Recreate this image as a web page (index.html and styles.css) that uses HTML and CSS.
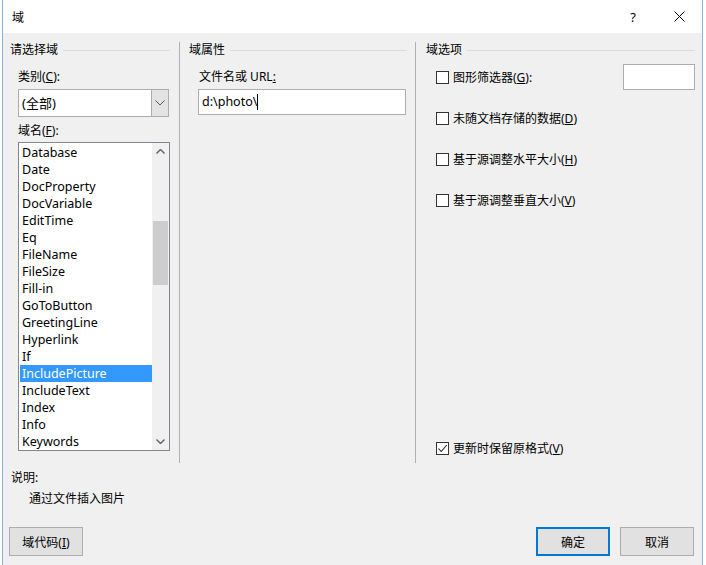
FILE: index.html
```html
<!DOCTYPE html>
<html lang="zh">
<head>
    <meta charset="UTF-8">
    <title>域</title>
    <link rel="stylesheet" href="styles.css">
</head>
<body>
    <div class="window">
        <div class="titlebar">
            <div class="title">域</div>
            <div class="title-buttons">
                <div class="title-btn">?</div>
                <div class="title-btn">
                    <svg width="11" height="11" viewBox="0 0 11 11"><path d="M0.5 0.5 L10.5 10.5 M10.5 0.5 L0.5 10.5" stroke="#000" stroke-width="1"/></svg>
                </div>
            </div>
        </div>

        <div class="content">
            <div class="groups">
                <!-- 请选择域 -->
                <div class="group group-select">
                    <div class="group-header"><span>请选择域</span><div class="group-line"></div></div>
                    <div class="field-label">类别(<u>C</u>):</div>
                    <div class="combo">
                        <div class="combo-value">(全部)</div>
                        <div class="combo-btn">
                            <svg width="10" height="6" viewBox="0 0 10 6"><path d="M0.5 0.5 L5 5 L9.5 0.5" stroke="#555" fill="none"/></svg>
                        </div>
                    </div>
                    <div class="field-label">域名(<u>F</u>):</div>
                    <div class="listbox">
                        <div class="list-items" id="fieldList"></div>
                        <div class="scrollbar">
                            <div class="scroll-arrow">
                                <svg width="9" height="5" viewBox="0 0 9 5"><path d="M0.5 4.5 L4.5 0.5 L8.5 4.5" stroke="#606060" stroke-width="1.4" fill="none"/></svg>
                            </div>
                            <div class="scroll-track"><div class="scroll-thumb"></div></div>
                            <div class="scroll-arrow">
                                <svg width="9" height="5" viewBox="0 0 9 5"><path d="M0.5 0.5 L4.5 4.5 L8.5 0.5" stroke="#606060" stroke-width="1.4" fill="none"/></svg>
                            </div>
                        </div>
                    </div>
                </div>

                <div class="separator"></div>

                <!-- 域属性 -->
                <div class="group group-props">
                    <div class="group-header"><span>域属性</span><div class="group-line"></div></div>
                    <div class="field-label">文件名或 URL<u>:</u></div>
                    <div class="textbox">d:\photo\<span class="caret"></span></div>
                </div>

                <div class="separator"></div>

                <!-- 域选项 -->
                <div class="group group-options">
                    <div class="group-header"><span>域选项</span><div class="group-line"></div></div>
                    <div class="option option-first">
                        <div class="checkbox"></div>
                        <span>图形筛选器(<u>G</u>):</span>
                        <div class="small-input"></div>
                    </div>
                    <div class="option"><div class="checkbox"></div><span>未随文档存储的数据(<u>D</u>)</span></div>
                    <div class="option"><div class="checkbox"></div><span>基于源调整水平大小(<u>H</u>)</span></div>
                    <div class="option"><div class="checkbox"></div><span>基于源调整垂直大小(<u>V</u>)</span></div>
                    <div class="spacer"></div>
                    <div class="option option-last">
                        <div class="checkbox">
                            <svg width="11" height="11" viewBox="0 0 11 11"><path d="M1.5 5.5 L4.2 8.5 L9.8 2" stroke="#222" stroke-width="1.1" fill="none"/></svg>
                        </div>
                        <span>更新时保留原格式(<u>V</u>)</span>
                    </div>
                </div>
            </div>

            <div class="description">
                <div class="desc-title">说明:</div>
                <div class="desc-text">通过文件插入图片</div>
            </div>

            <div class="footer">
                <button class="btn">域代码(<u>I</u>)</button>
                <div class="footer-right">
                    <button class="btn btn-default">确定</button>
                    <button class="btn">取消</button>
                </div>
            </div>
        </div>
    </div>

    <script>
        // Fill the field name list
        const fieldNames = [
            'Database', 'Date', 'DocProperty', 'DocVariable', 'EditTime', 'Eq',
            'FileName', 'FileSize', 'Fill-in', 'GoToButton', 'GreetingLine',
            'Hyperlink', 'If', 'IncludePicture', 'IncludeText', 'Index', 'Info', 'Keywords'
        ];
        const listElement = document.getElementById('fieldList');
        fieldNames.forEach(function(name) {
            const item = document.createElement('div');
            item.classList.add('list-item');
            if (name === 'IncludePicture') {
                item.classList.add('selected');
            }
            item.textContent = name;
            listElement.appendChild(item);
        });
    </script>
</body>
</html>
```

FILE: styles.css
```css
body {
    margin: 0;
    background-color: #ffffff;
    font-family: "Noto Sans", "Noto Sans CJK SC", sans-serif;
    font-size: 12px;
    color: #000;
    padding-left: 2px;
}

.window {
    width: 699px;
    height: 565px;
    border-left: 1px solid #8db2d8;
    border-right: 1px solid #8db2d8;
    display: flex;
    flex-direction: column;
    overflow: hidden;
}

.titlebar {
    height: 33px;
    background-color: #ffffff;
    display: flex;
    justify-content: space-between;
    align-items: center;
}

.title {
    padding-left: 9px;
    font-size: 12px;
}

.title-buttons {
    display: flex;
    height: 33px;
}

.title-btn {
    width: 46px;
    display: flex;
    align-items: center;
    justify-content: center;
    font-size: 13px;
}

.content {
    flex: 1;
    background-color: #f0f0f0;
    display: flex;
    flex-direction: column;
}

.groups {
    display: flex;
    padding-top: 9px;
    height: 421px;
}

.group {
    display: flex;
    flex-direction: column;
}

.group-header {
    display: flex;
    align-items: center;
    height: 16px;
    line-height: 16px;
}

.group-line {
    flex: 1;
    height: 1px;
    background-color: #dcdcdc;
    margin-left: 5px;
}

.separator {
    width: 1px;
    background-color: #b0b0b0;
}

.field-label {
    line-height: 16px;
    height: 16px;
}

.group-select {
    width: 176px;
    padding-left: 7px;
    box-sizing: border-box;
}

.group-select .group-line {
    margin-right: 9px;
}

.group-select .field-label {
    margin-left: 8px;
    margin-top: 11px;
}

.combo {
    margin-left: 8px;
    margin-top: 4px;
    width: 151px;
    height: 28px;
    box-sizing: border-box;
    border: 1px solid #adadad;
    background-color: #fff;
    display: flex;
}

.combo-value {
    flex: 1;
    line-height: 26px;
    padding-left: 3px;
    font-size: 13px;
}

.combo-btn {
    width: 16px;
    background-color: #e3e3e3;
    border-left: 1px solid #adadad;
    display: flex;
    align-items: center;
    justify-content: center;
}

.group-select .combo + .field-label {
    margin-top: 6px;
}

.listbox {
    margin-top: 3px;
    margin-left: 8px;
    width: 152px;
    height: 309px;
    box-sizing: border-box;
    border: 1px solid #828790;
    background-color: #fff;
    display: flex;
}

.list-items {
    flex: 1;
    padding: 1px 0 0 1px;
}

.list-item {
    height: 17px;
    line-height: 17px;
    padding-left: 2px;
    font-size: 12.5px;
}

.list-item.selected {
    background-color: #3399ff;
    color: #fff;
}

.scrollbar {
    width: 17px;
    background-color: #f0f0f0;
    display: flex;
    flex-direction: column;
}

.scroll-arrow {
    height: 17px;
    display: flex;
    align-items: center;
    justify-content: center;
}

.scroll-track {
    flex: 1;
}

.scroll-thumb {
    margin: 61px 1px 0 1px;
    height: 64px;
    background-color: #cdcdcd;
}

.group-props {
    width: 235px;
    padding-left: 9px;
    box-sizing: border-box;
}

.group-props .group-line {
    margin-right: 8px;
}

.group-props .field-label {
    margin-left: 10px;
    margin-top: 11px;
}

.textbox {
    margin-left: 9px;
    margin-top: 4px;
    width: 208px;
    height: 26px;
    box-sizing: border-box;
    border: 1px solid #adadad;
    background-color: #fff;
    line-height: 24px;
    padding-left: 3px;
    font-size: 12.5px;
    display: flex;
    align-items: center;
}

.caret {
    width: 1px;
    height: 16px;
    background-color: #000;
}

.group-options {
    flex: 1;
    padding-left: 10px;
    box-sizing: border-box;
}

.group-options .group-line {
    margin-right: 7px;
}

.option {
    display: flex;
    align-items: center;
    height: 16px;
    margin-left: 10px;
    margin-top: 25px;
}

.option-first {
    margin-top: 11px;
}

.option .checkbox {
    width: 13px;
    height: 13px;
    box-sizing: border-box;
    border: 1px solid #333;
    background-color: #fff;
    margin-right: 4px;
    display: flex;
    align-items: center;
    justify-content: center;
}

.small-input {
    margin-left: auto;
    margin-right: 7px;
    width: 72px;
    height: 26px;
    box-sizing: border-box;
    border: 1px solid #adadad;
    background-color: #fff;
}

.spacer {
    flex: 1;
}

.option-last {
    margin-bottom: 7px;
}

.description {
    padding-left: 8px;
    margin-top: 7px;
}

.desc-title {
    line-height: 16px;
}

.desc-text {
    line-height: 16px;
    margin-top: 5px;
    padding-left: 18px;
}

.footer {
    display: flex;
    justify-content: space-between;
    padding: 0 8px 0 6px;
    margin-top: 20px;
}

.footer-right {
    display: flex;
    gap: 10px;
}

.btn {
    width: 74px;
    height: 29px;
    box-sizing: border-box;
    border: 1px solid #adadad;
    background-color: #e1e1e1;
    font-family: "Noto Sans", "Noto Sans CJK SC", sans-serif;
    font-size: 12px;
    color: #000;
    padding: 0;
}

.btn-default {
    border: 2px solid #0078d7;
}
```
